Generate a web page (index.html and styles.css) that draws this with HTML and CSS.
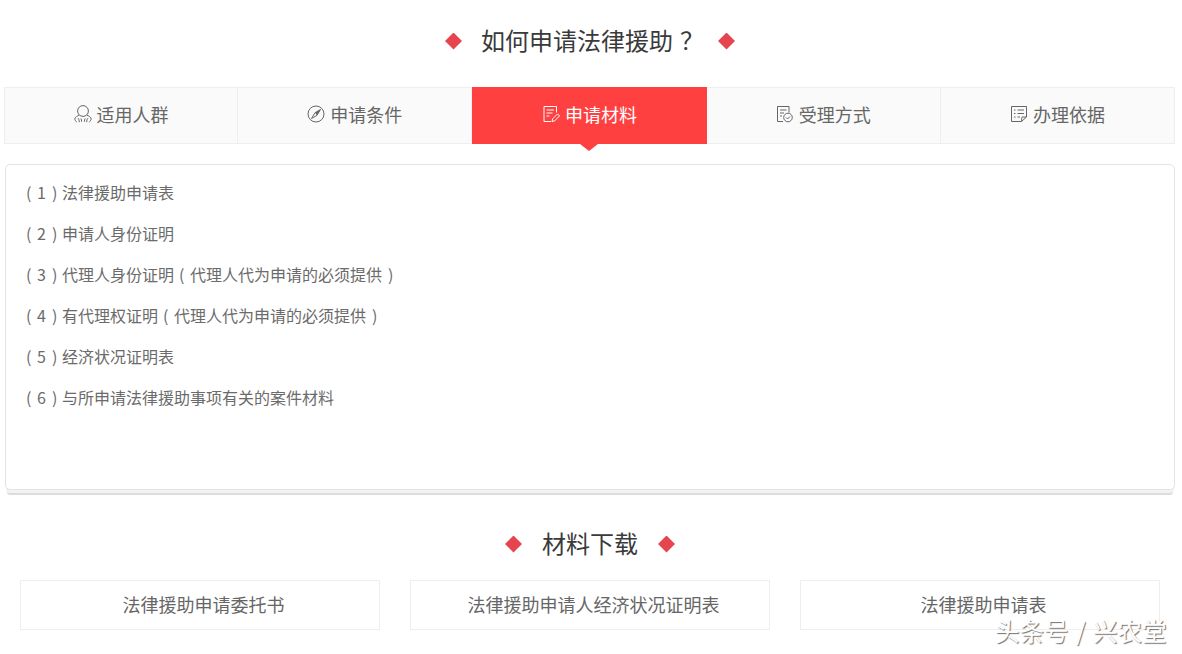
FILE: index.html
```html
<!DOCTYPE html>
<html lang="zh-CN">
<head>
<meta charset="utf-8">
<title>如何申请法律援助</title>
<link rel="stylesheet" href="styles.css">
</head>
<body>
<main class="page">
  <h2 class="title title-main"><i class="diamond"></i><span class="title-text">如何申请法律援助<b class="qmark">？</b></span><i class="diamond"></i></h2>
  <nav class="tabs">
    <a class="tab">
      <svg class="icon" viewBox="0 0 18 18"><circle cx="9" cy="6" r="5.400"/><path d="M5 10.300C3.500 11 .8 12 .8 14c0 1 1 2 2 3.200M13 10.300c1.500.7 4.200 1.700 4.200 3.700 0 1-1 2-2 3.200M3.800 13c1 .8 1.500 2.200 1.500 4.200M14.200 13c-1 .8-1.500 2.200-1.500 4.200M6.800 13.500c.7.900.8 2 .8 3.200M11.200 13.500c-.7.900-.8 2-.8 3.200"/></svg>
      <span>适用人群</span>
    </a>
    <a class="tab">
      <svg class="icon" viewBox="0 0 18 18"><circle cx="9" cy="9" r="8"/><path d="M13.500 4.500 10 10.300 4.500 13.500 8 7.700z"/><path class="needle" d="M13.500 4.500 10 10.300 8 7.700z"/></svg>
      <span>申请条件</span>
    </a>
    <a class="tab tab-active">
      <svg class="icon" viewBox="0 0 18 18"><path d="M9 16.500H2V1.500h12.500v6M4.500 5h7.500M4.500 8h6M4.500 11h3"/><path d="M10 16.500l.6-2.600 5-5 2 2-5 5z"/></svg>
      <span>申请材料</span>
    </a>
    <a class="tab">
      <svg class="icon" viewBox="0 0 18 18"><path d="M7 16.500H1.500V1.500h11.500v6M4 5h6.500M4 8h4M4 11h2"/><circle cx="12" cy="12.500" r="4.300"/><path d="M10 12.500l1.500 1.500 2.500-2.500"/></svg>
      <span>受理方式</span>
    </a>
    <a class="tab">
      <svg class="icon" viewBox="0 0 18 18"><path d="M11.500 16.500H1.500V1.500h15v10.500zM11.500 16.500c.2-2 .2-3.500.5-4.500h4.500M4 5h1.500M7.500 5h6.500M4 8.500h1.500M7.500 8.500h6.500M4 12h1.500M7.500 12h2.500"/></svg>
      <span>办理依据</span>
    </a>
  </nav>
  <section class="panel">
    <p><span class="open">(</span><span class="num">1</span><span class="close">)</span>法律援助申请表</p>
    <p><span class="open">(</span><span class="num">2</span><span class="close">)</span>申请人身份证明</p>
    <p><span class="open">(</span><span class="num">3</span><span class="close">)</span>代理人身份证明<span class="open">(</span>代理人代为申请的必须提供<span class="close">)</span></p>
    <p><span class="open">(</span><span class="num">4</span><span class="close">)</span>有代理权证明<span class="open">(</span>代理人代为申请的必须提供<span class="close">)</span></p>
    <p><span class="open">(</span><span class="num">5</span><span class="close">)</span>经济状况证明表</p>
    <p><span class="open">(</span><span class="num">6</span><span class="close">)</span>与所申请法律援助事项有关的案件材料</p>
  </section>
  <h2 class="title title-sub"><i class="diamond"></i><span class="title-text">材料下载</span><i class="diamond"></i></h2>
  <div class="downloads">
    <a class="download">法律援助申请委托书</a>
    <a class="download">法律援助申请人经济状况证明表</a>
    <a class="download">法律援助申请表</a>
  </div>
</main>
<div class="watermark">头条号 / 兴农堂</div>
</body>
</html>
```
FILE: styles.css
```css
* { box-sizing: border-box; }
html, body { margin: 0; height: 100%; overflow: hidden; background: #fff; }
body {
  position: relative;
  font-family: "Noto Sans CJK SC", "Noto Sans", sans-serif;
}
.page { display: flex; flex-direction: column; }

.title {
  display: flex;
  justify-content: center;
  align-items: center;
  gap: 20px;
  height: 48px;
  margin: 0;
  padding-right: 2px;
  font-size: 24px;
  font-weight: 400;
  color: #3a3a3a;
}
.title-main { margin: 17px 0 22px; }
.title-sub { margin: 30px 0 12px; }
.title-text { padding-bottom: 4px; }
.title-main .title-text { margin: 0 1px 0 -1px; }
.qmark { display: inline-block; width: 24px; padding-left: 7px; font-weight: 400; }
.diamond {
  width: 17px;
  height: 17px;
  background: #e6454f;
  clip-path: polygon(50% 0, 100% 50%, 50% 100%, 0 50%);
}

.tabs {
  display: grid;
  grid-template-columns: repeat(5, 1fr);
  height: 57px;
  margin: 0 7px 0 4px;
  background: #fafafa;
  border-top: 1px solid #eeeeee;
  border-bottom: 1px solid #eeeeee;
}
.tab {
  position: relative;
  display: flex;
  justify-content: center;
  align-items: center;
  gap: 5px;
  padding-bottom: 3px;
  font-size: 18px;
  color: #666;
  border-right: 1px solid #eeeeee;
}
.tab:first-child { border-left: 1px solid #eeeeee; }
.tab-active {
  margin: -1px 0;
  background: #ff4040;
  color: #fff;
  border-right: 0;
}
.tab-active::after {
  content: "";
  position: absolute;
  left: 50%;
  top: 100%;
  margin-left: -9px;
  border: 9px solid transparent;
  border-top: 7px solid #ff4040;
  border-bottom: 0;
}
.icon {
  width: 18px;
  height: 18px;
  flex: none;
  fill: none;
  stroke: currentColor;
  stroke-width: 1;
}
.needle { fill: currentColor; stroke: none; }

.panel {
  height: 326px;
  margin: 20px 7px 0 5px;
  padding: 7px 0 0 15px;
  background: #fff;
  border: 1px solid #e3e3e3;
  border-radius: 5px;
  box-shadow: 0 4px 0 -1px #f2f2f2, 0 7px 0 -2px #dcdcdc;
  font-size: 16px;
  color: #6b6b6b;
}
.panel p { margin: 0; height: 41px; line-height: 41px; }
.open { display: inline-block; width: 16px; padding-left: 5px; }
.close { display: inline-block; width: 16px; padding-left: 6px; }
.num { display: inline-block; width: 9px; }

.downloads {
  display: flex;
  gap: 30px;
  padding: 0 20px;
}
.download {
  width: 360px;
  height: 50px;
  padding-left: 7px;
  line-height: 46px;
  text-align: center;
  font-size: 18px;
  color: #666;
  border: 1px solid #eeeeee;
}

.watermark {
  position: absolute;
  left: 995px;
  top: 613px;
  font-size: 24.5px;
  line-height: 36px;
  word-spacing: 2px;
  white-space: nowrap;
  color: #fff;
  text-shadow: 1px 1px 1px #6f6f6f;
}
```
